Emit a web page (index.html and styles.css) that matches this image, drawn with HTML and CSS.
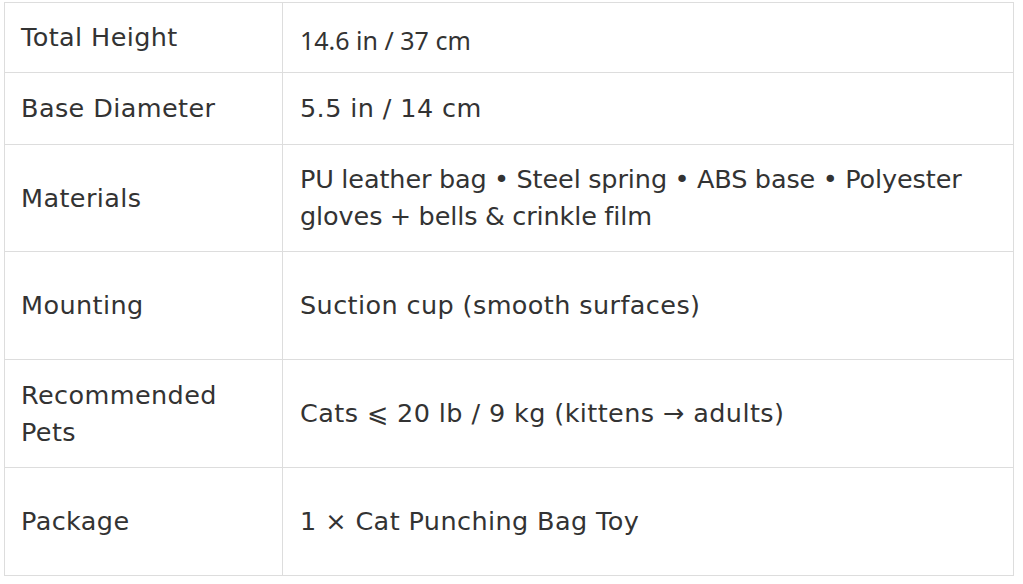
FILE: index.html
```html
<!DOCTYPE html>
<html lang="en">
<head>
<meta charset="utf-8">
<title>Specifications</title>
<link rel="stylesheet" href="styles.css">
</head>
<body>
<div class="spec-table">
  <div class="cell label">Total Height</div>
  <div class="cell value first-value">14.6 in / 37 cm</div>

  <div class="cell label">Base Diameter</div>
  <div class="cell value">5.5 in / 14 cm</div>

  <div class="cell label">Materials</div>
  <div class="cell value materials">PU leather bag • Steel spring • ABS base • Polyester gloves + bells &amp; crinkle film</div>

  <div class="cell label">Mounting</div>
  <div class="cell value">Suction cup (smooth surfaces)</div>

  <div class="cell label">Recommended Pets</div>
  <div class="cell value">Cats ⩽ 20 lb / 9 kg (kittens → adults)</div>

  <div class="cell label">Package</div>
  <div class="cell value">1 × Cat Punching Bag Toy</div>
</div>
</body>
</html>
```

FILE: styles.css
```css
html, body {
  margin: 0;
  padding: 0;
  background: #ffffff;
}

body {
  padding: 2px 0 0 4px;
  font-family: "DejaVu Sans", "Open Sans", sans-serif;
  color: #333333;
}

.spec-table {
  box-sizing: border-box;
  width: 1010px;
  display: grid;
  grid-template-columns: 278px 730px;
  grid-template-rows: 70px 72px 107px 108px 108px 108px;
  border: 1px solid #dddddd;
  border-bottom: 0;
}

.cell {
  box-sizing: border-box;
  display: flex;
  align-items: center;
  border-bottom: 1px solid #dddddd;
  font-size: 25.5px;
  line-height: 37px;
  letter-spacing: 0.4px;
}

.label {
  border-right: 1px solid #dddddd;
  padding: 0 20px 0 16px;
}

.value {
  padding: 0 10px 0 17px;
}

.materials {
  letter-spacing: -0.1px;
  word-spacing: -0.5px;
}

.first-value {
  font-family: "Noto Sans", "Open Sans", sans-serif;
  font-size: 25px;
  letter-spacing: 0;
  padding-top: 6px;
}
```
